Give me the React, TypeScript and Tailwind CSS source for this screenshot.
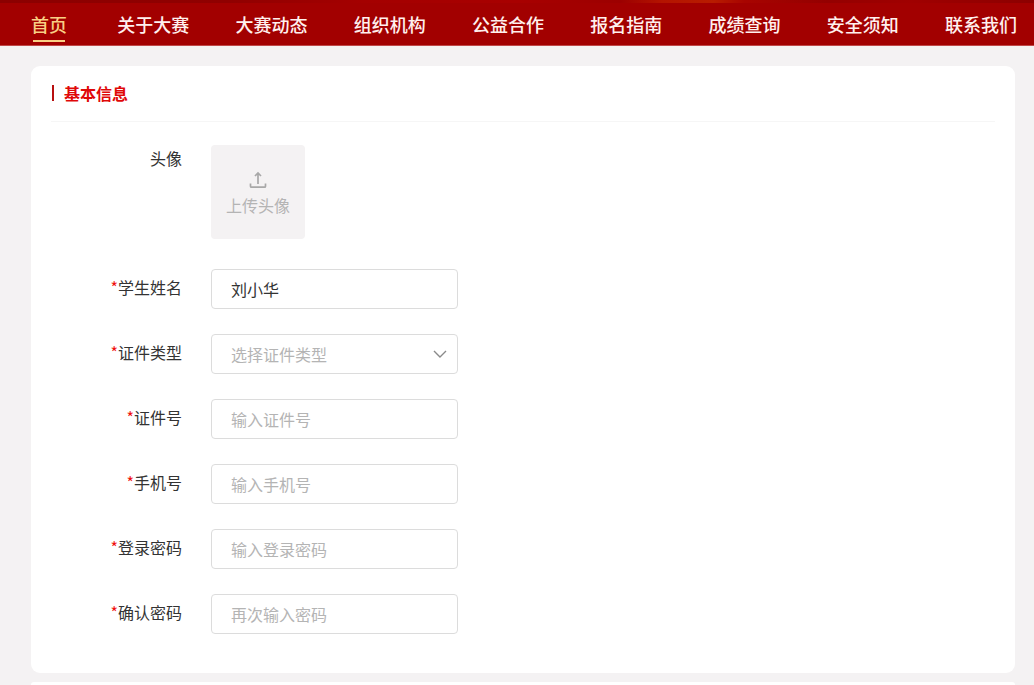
import { useState } from "react";

const navItems = [
  "首页",
  "关于大赛",
  "大赛动态",
  "组织机构",
  "公益合作",
  "报名指南",
  "成绩查询",
  "安全须知",
  "联系我们",
];

const fieldBox =
  "h-10 w-full rounded-[4px] border border-[#dcdcdc] bg-white px-[19px] text-base outline-none focus:border-[#a50000]";

function Label({ htmlFor, text }: { htmlFor: string; text: string }) {
  return (
    <label
      htmlFor={htmlFor}
      className="flex h-9 w-[131px] shrink-0 items-center justify-end text-base text-[#333333]"
    >
      <span className="text-[#f01010]">*</span>
      {text}
    </label>
  );
}

function TextField({
  id,
  label,
  placeholder,
  type = "text",
  initial = "",
}: {
  id: string;
  label: string;
  placeholder?: string;
  type?: string;
  initial?: string;
}) {
  const [value, setValue] = useState(initial);
  return (
    <div className="flex gap-[29px]">
      <Label htmlFor={id} text={label} />
      <div className="w-[247px]">
        <input
          id={id}
          type={type}
          value={value}
          placeholder={placeholder}
          onChange={(e) => setValue(e.target.value)}
          className={`${fieldBox} text-[#333333] placeholder:text-[#b4b4b4]`}
        />
      </div>
    </div>
  );
}

function TypeSelect() {
  const [value, setValue] = useState("");
  return (
    <div className="flex gap-[29px]">
      <Label htmlFor="idType" text="证件类型" />
      <div className="relative w-[247px]">
        <select
          id="idType"
          value={value}
          onChange={(e) => setValue(e.target.value)}
          className={`${fieldBox} appearance-none ${value ? "text-[#333333]" : "text-[#b4b4b4]"}`}
        >
          <option value="">选择证件类型</option>
          <option value="id">身份证</option>
          <option value="passport">护照</option>
        </select>
        <svg
          viewBox="0 0 14 8"
          className="pointer-events-none absolute top-4 right-[11px] h-2 w-[14px]"
          fill="none"
          stroke="#8a8a8a"
          strokeWidth="1.4"
          aria-hidden="true"
        >
          <path d="M1 1l6 6 6-6" />
        </svg>
      </div>
    </div>
  );
}

export default function App() {
  return (
    <div className="flex min-h-screen flex-col bg-[#f4f2f3] font-['Noto_Sans_CJK_SC',sans-serif]">
      <header>
        <div className="h-[3px] bg-[linear-gradient(90deg,#8c0000_0%,#900000_22%,#a40000_35%,#a80000_50%,#9c0000_60%,#b41400_64%,#b81c00_69%,#a80400_72%,#940000_80%,#a00000_88%,#8c0000_100%)]" />
        <nav className="border-b border-[#c04848] bg-[#a20000] pr-[17px] pl-[31px]">
          <ul className="flex h-[42px] justify-between">
            {navItems.map((item, i) => (
              <li key={item} className={i === 0 ? "w-10" : ""}>
                <a
                  href="#"
                  aria-current={i === 0 ? "page" : undefined}
                  className={`flex flex-col pt-[7px] text-lg leading-7 font-medium whitespace-nowrap ${i === 0 ? "text-[#f9cf85]" : "text-[#fff0ee]"}`}
                >
                  {item}
                  {i === 0 && <span className="mt-0.5 ml-0.5 h-0.5 w-8 bg-[#f9cf85]" />}
                </a>
              </li>
            ))}
          </ul>
        </nav>
      </header>

      <main className="flex grow flex-col gap-[9px] pt-5 pr-[19px] pl-[31px]">
        <section className="rounded-[9px] bg-white px-5 pb-[39px]">
          <h2 className="flex h-14 items-center gap-[10px] border-b border-[#f6f6f6] pb-0.5 text-base font-bold text-[#e00808]">
            <span className="ml-px h-4 w-0.5 bg-[#b81010]" />
            基本信息
          </h2>
          <form className="flex flex-col gap-[25px] pt-[23px]">
            <div className="mb-[5px] flex gap-[29px]">
              <label
                htmlFor="avatar"
                className="w-[131px] shrink-0 text-right text-base leading-[26px] text-[#333333]"
              >
                头像
              </label>
              <button
                id="avatar"
                type="button"
                className="flex h-[94px] w-[94px] flex-col items-center justify-center gap-1 rounded-[4px] bg-[#f4f2f3] pt-1 text-base text-[#b4b4b4]"
              >
                <svg
                  viewBox="0 0 18 18"
                  className="h-[18px] w-[18px]"
                  fill="none"
                  stroke="#a8a8a8"
                  strokeWidth="1.7"
                  aria-hidden="true"
                >
                  <path d="M9 13V2M6 5L9 2l3 3M1.5 12.5v2.7q0 1 1 1h13q1 0 1-1v-2.7" />
                </svg>
                上传头像
              </button>
            </div>
            <TextField id="name" label="学生姓名" initial="刘小华" />
            <TypeSelect />
            <TextField id="idNumber" label="证件号" placeholder="输入证件号" />
            <TextField id="phone" label="手机号" placeholder="输入手机号" type="tel" />
            <TextField id="password" label="登录密码" placeholder="输入登录密码" type="password" />
            <TextField id="confirm" label="确认密码" placeholder="再次输入密码" type="password" />
          </form>
        </section>
        <section className="grow rounded-t-[9px] bg-white" />
      </main>
    </div>
  );
}
